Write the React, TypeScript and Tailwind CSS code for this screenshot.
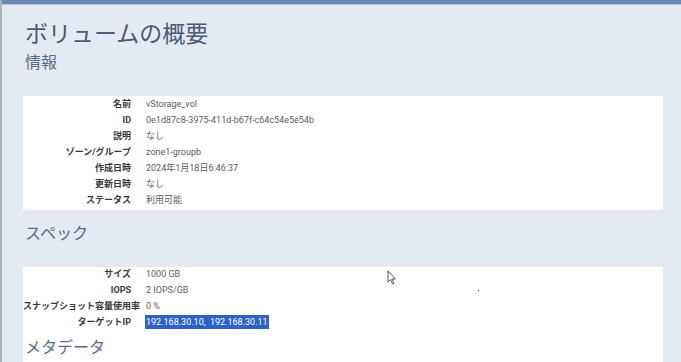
const info: [string, string][] = [
  ["名前", "vStorage_vol"],
  ["ID", "0e1d87c8-3975-411d-b67f-c64c54e5e54b"],
  ["説明", "なし"],
  ["ゾーン/グループ", "zone1-groupb"],
  ["作成日時", "2024年1月18日6:46:37"],
  ["更新日時", "なし"],
  ["ステータス", "利用可能"],
];

const spec: [string, string][] = [
  ["サイズ", "1000 GB"],
  ["IOPS", "2 IOPS/GB"],
  ["スナップショット容量使用率", "0 %"],
];

function Row({ label, children }: { label: string; children: React.ReactNode }) {
  return (
    <div className="flex items-center h-4">
      <div className="w-[108px] shrink-0 text-right font-bold text-[#3a3a3a] whitespace-nowrap">{label}</div>
      <div className="pl-[15px] text-[#5c5c5c] whitespace-nowrap">{children}</div>
    </div>
  );
}

export default function App() {
  return (
    <div className="relative w-[681px] h-[362px] overflow-hidden bg-[#e4eaf2] border-l-2 border-[#aeb2b8] font-['Roboto','Noto_Sans_CJK_JP',sans-serif]">
      <div className="h-[4px] bg-[#6a84b8] border-b border-[#b5c6df] box-content" />
      <div className="flex">
        <div className="w-[640px] ml-[21px]">
          <h1 className="text-[23px] leading-[30px] mt-[15px] text-[#4b5b78] pl-[2px]">ボリュームの概要</h1>
          <h2 className="text-[16px] leading-[22px] mt-[2px] text-[#5a6b86] pl-[2px]">情報</h2>
          <div className="mt-[22px] bg-white pt-[1px] pb-[1px] text-[9px]">
            {info.map(([k, v]) => (
              <Row key={k} label={k}>{v}</Row>
            ))}
          </div>
          <h2 className="text-[16px] leading-[22px] mt-[13px] text-[#5a6b86] pl-[2px]">スペック</h2>
          <div className="mt-[22px] bg-white text-[9px] h-[120px]">
            {spec.map(([k, v]) => (
              <Row key={k} label={k}>{v}</Row>
            ))}
            <Row label="ターゲットIP">
              <span className="-ml-[1px] px-[1px] py-[2px] bg-[#2d63c8] text-white">192.168.30.10,&nbsp; 192.168.30.11</span>
            </Row>
            <h2 className="text-[16px] leading-[22px] mt-[6px] text-[#5a6b86] pl-[2px]">メタデータ</h2>
          </div>
        </div>
        <div className="flex-1" />
      </div>
      <svg className="absolute left-[385px] top-[270px]" width="10" height="16" viewBox="0 0 10 16">
        <path d="M1 1 L1 12 L3.5 9.5 L5.5 14 L7 13.3 L5 9 L8.5 9 Z" fill="#fff" stroke="#555" strokeWidth="1" strokeLinejoin="round" />
      </svg>
      <span className="absolute left-[476px] top-[290px] w-px h-px bg-[#222]" />
    </div>
  );
}
